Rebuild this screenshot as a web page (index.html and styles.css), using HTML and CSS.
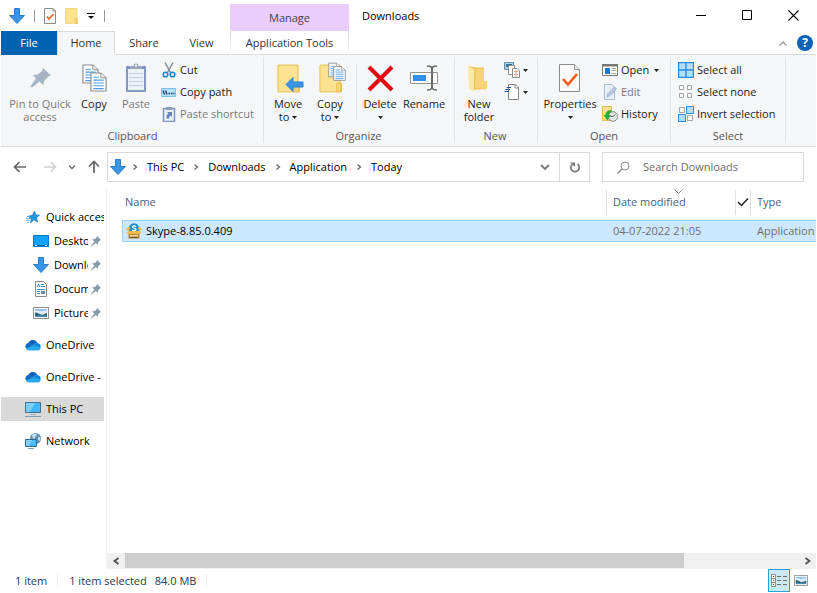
FILE: index.html
```
<!DOCTYPE html>
<html lang="en">
	<head>
		<meta charset="utf-8">
		<title>Downloads</title>
		<meta name="viewport" content="width=device-width, initial-scale=1" />
		<link rel="stylesheet" href="styles.css">
	</head>
	<body>

		<!-- shapes used more than once -->
		<svg class="Defs" aria-hidden="true">
			<symbol id="DownArrow" viewBox="0 0 16 16">
				<path d="M5.500.500h5v7h5L8 15.500.500 7.500h5z" fill="#3a96e4" stroke="#2a7cc6"/>
			</symbol>
			<symbol id="Caret" viewBox="0 0 5 3">
				<path d="M0 0h5L2.500 3z" fill="#222"/>
			</symbol>
			<symbol id="Chevron" viewBox="0 0 6 8">
				<path d="M1.500 1.500L4.500 4l-3 2.500" fill="none" stroke="#666" stroke-width="1.300"/>
			</symbol>
			<symbol id="Pushpin" viewBox="0 0 12 12">
				<path d="M7 1l4 4-1.200.4L8 7.200l-.2 2.600L5.500 8 1.500 11.500 1 11l3.300-4.400L2.200 4.200l2.600-.2L6.600 2.200z" fill="#8a99a6"/>
			</symbol>
			<symbol id="Cloud" viewBox="0 0 16 12">
				<path d="M3.500 4.200A4.700 4.700 0 0 1 12.300 4L9 8.500z" fill="#0a5cb8"/>
				<path d="M4 3.800A3.700 3.700 0 0 0 1 9.500l7 .5 2-4z" fill="#0f6cc6"/>
				<path d="M7 5.500c1.500-1.800 4-2.200 5.500-1.400A3.500 3.500 0 0 1 15.600 8.500L12 10z" fill="#1484dc"/>
				<path d="M1 9.500L9 6l6.500 3c0 1.500-1.300 2.500-3 2.500H4C2.700 11.500 1.500 10.700 1 9.500z" fill="#28a8ea"/>
			</symbol>
			<symbol id="Page" viewBox="0 0 18 21">
				<path d="M1 1h10.500L17 6v14H1z" fill="#fff" stroke="#8b8b8b" stroke-width="1.200"/>
				<path d="M11.500 1v5H17" fill="#eee" stroke="#8b8b8b"/>
				<path d="M3.500 5.500h6M3.500 8.500h11M3.500 11.500h11M3.500 14.500h11M3.500 17.500h11" stroke="#4a9bea" stroke-width="1.200"/>
			</symbol>
			<symbol id="Folder" viewBox="0 0 24 30">
				<path d="M1 1h21v19h1.500v9H1z" fill="#fde28f" stroke="#e6bf55"/>
				<path d="M18.500 29v-9h4v9z" fill="#f8d775" stroke="#e6bf55"/>
			</symbol>
			<symbol id="Photo" viewBox="0 0 16 12">
				<path d="M.500.500h15v11H.500z" fill="#fff" stroke="#8f8f8f"/>
				<path d="M2 2h12v3H2z" fill="#8fbdf0"/>
				<path d="M2 3.500c2-1 4 .5 6 .5s4-1 6 0V7H2z" fill="#dcecf8"/>
				<path d="M2 5.500c2 0 4 1.500 6 2s4-.5 6-1.500v3H2z" fill="#2c6475"/>
				<path d="M2 8.500h12V10H2z" fill="#4a8cb8"/>
			</symbol>
		</svg>

		<header class="TitleBar">
			<div class="QuickTools">
				<svg width="16" height="16"><use href="#DownArrow"/></svg>
				<span class="Divider"></span>
				<button class="IconButton" aria-label="Properties">
					<svg width="12" height="16" viewBox="0 0 12 16"><path d="M.500.500H9L11.500 3v12.500H.500z" fill="#fafafa" stroke="#8d8d8d"/><path d="M9 .500V3h2.500" fill="none" stroke="#8d8d8d"/><path d="M3 8.500L5 11l4.500-5" fill="none" stroke="#f0622a" stroke-width="1.600"/></svg>
				</button>
				<button class="IconButton" aria-label="New folder">
					<svg width="13" height="16" viewBox="0 0 24 30" preserveAspectRatio="none"><use href="#Folder"/></svg>
				</button>
				<button class="IconButton" aria-label="Customize">
					<svg width="8" height="8" viewBox="0 0 8 8"><path d="M0 1.500h8" stroke="#111"/><path d="M1 4h6L4 7z" fill="#111"/></svg>
				</button>
				<span class="Divider"></span>
			</div>
			<div class="ContextTitle">Manage</div>
			<h1>Downloads</h1>
			<div class="WindowButtons">
				<button aria-label="Minimize"><svg width="11" height="11"><path d="M0 5.500h10" stroke="#000"/></svg></button>
				<button aria-label="Maximize"><svg width="11" height="11"><path d="M.500.500h9v9h-9z" fill="none" stroke="#000"/></svg></button>
				<button aria-label="Close"><svg width="11" height="11"><path d="M.500.500l10 10M10.500.500l-10 10" stroke="#000" stroke-width="1.100"/></svg></button>
			</div>
		</header>

		<nav class="Tabs">
			<button class="Tab File">File</button>
			<button class="Tab Active">Home</button>
			<button class="Tab">Share</button>
			<button class="Tab View">View</button>
			<button class="Tab Context">Application Tools</button>
			<div class="TabsEnd">
				<button class="IconButton" aria-label="Collapse"><svg width="8" height="5"><path d="M.500 4.500L4 1l3.500 3.500" fill="none" stroke="#999" stroke-width="1.300"/></svg></button>
				<button class="Help" aria-label="Help">?</button>
			</div>
		</nav>

		<div class="Ribbon">
			<section class="Group Clipboard">
				<div class="Tools">
					<button class="Large Wide" disabled>
						<svg width="32" height="32" viewBox="0 0 32 32"><path d="M19 6l8 7.500-2.500 1-4.500 4.500-.5 4.500-4-4L8 25.500l-1.500-.5L7 23.500l5-7L9 13l5-.5 4-3.500z" fill="#a7b4c6"/></svg>
						<span>Pin to Quick<br>access</span>
					</button>
					<button class="Large Narrow">
						<svg width="32" height="32"><use href="#Page" x="4" y="2" width="17" height="20"/><use href="#Page" x="12" y="10" width="17" height="20"/></svg>
						<span>Copy</span>
					</button>
					<button class="Large" disabled>
						<svg width="32" height="32" viewBox="0 0 32 32"><rect x="6" y="4" width="20" height="26" rx="1" fill="#8199c0"/><path d="M8 7h16v21H8z" fill="#edf2f9"/><path d="M9 11.500h14M9 15.500h14M9 19.500h14M9 23.500h14" stroke="#c3d0e2"/><path d="M10 7V4h3.500a2.500 2.500 0 0 1 5 0H22v3z" fill="#9aa9bd"/><circle cx="16" cy="3.500" r="1" fill="#fff"/></svg>
						<span>Paste</span>
					</button>
					<div class="Stack">
						<button class="Small"><svg width="16" height="16" viewBox="0 0 16 16"><path d="M4 .500l5.500 10M12 .500l-5.500 10" stroke="#7d8c99" stroke-width="1.500"/><circle cx="4.500" cy="12.500" r="2.300" fill="none" stroke="#1683d0" stroke-width="1.600"/><circle cx="11.500" cy="12.500" r="2.300" fill="none" stroke="#1683d0" stroke-width="1.600"/></svg>Cut</button>
						<button class="Small"><svg width="16" height="16" viewBox="0 0 16 16"><path d="M.500 4.500h14v8H.500z" fill="#b4e0fb" stroke="#7cc0e8"/><path d="M2 6.500l1.500 4M4.500 6.500l1.500 4M7.500 9.500h1.500M10 9.500h1.500M12.300 9.500h1.200" stroke="#163e66" stroke-width="1.300"/></svg>Copy path</button>
						<button class="Small" disabled><svg width="16" height="16" viewBox="0 0 16 16"><path d="M2.500 2.500h11v13h-11z" fill="#eaf0f8" stroke="#7e97bf" stroke-width="1.500"/><path d="M5 1h6v3H5z" fill="#8b9db6"/><path d="M5.500 12.500c0-3 .5-4 2-5L6 6h5v5L9.500 9.500c-1 .5-1.500 1.500-1.500 3z" fill="#6482b4"/></svg>Paste shortcut</button>
					</div>
				</div>
				<h2>Clipboard</h2>
			</section>
			<section class="Group Organize">
				<div class="Tools">
					<button class="Large">
						<svg width="32" height="32"><use href="#Folder" x="5" y="2" width="23" height="29"/><path d="M14 22.500l7-7v4.500h10v5H21v4.500z" fill="#3a96e4" stroke="#2d82cd"/></svg>
						<span>Move<br>to <svg class="Caret"><use href="#Caret"/></svg></span>
					</button>
					<button class="Large">
						<svg width="32" height="32"><use href="#Folder" x="5" y="2" width="23" height="29"/><use href="#Page" x="14" y="0" width="13" height="16"/><use href="#Page" x="19" y="3" width="13" height="17"/></svg>
						<span>Copy<br>to <svg class="Caret"><use href="#Caret"/></svg></span>
					</button>
					<span class="ToolDivider"></span>
					<button class="Large">
						<svg width="32" height="32"><path d="M5 5l23 23M28 5L5 28" stroke="#e30613" stroke-width="4"/></svg>
						<span>Delete<br><svg class="Caret"><use href="#Caret"/></svg></span>
					</button>
					<button class="Large">
						<svg width="32" height="32"><path d="M2.500 10.500h27v11h-27z" fill="#fff" stroke="#949494"/><path d="M5 13h13v6H5z" fill="#3290e4"/><path d="M24 5v22" stroke="#6a6a6a" stroke-width="2"/><path d="M19 4q4 0 5 2 1-2 5-2M19 28q4 0 5-2 1 2 5 2" fill="none" stroke="#6a6a6a" stroke-width="1.600"/></svg>
						<span>Rename</span>
					</button>
				</div>
				<h2>Organize</h2>
			</section>
			<section class="Group New">
				<div class="Tools">
					<button class="Large">
						<svg width="32" height="32"><path d="M6 4l7 1.500h8V19h2v8l-13 1z" fill="#efc65b"/><path d="M13 7h8v12h3v8l-12-1z" fill="#f6d477"/><path d="M5 4l6 3v23l-5-3z" fill="#fde9a5"/></svg>
						<span>New<br>folder</span>
					</button>
					<div class="Stack">
						<button class="Small" aria-label="New item"><svg width="16" height="16" viewBox="0 0 16 16"><path d="M.500.500h9v7h-9z" fill="#a4d3f3" stroke="#6d8ba3"/><path d="M2 2h6v3H2z" fill="#31708f"/><path d="M4.500 3.500h6v9h-6z" fill="#fff" stroke="#8b8b8b"/><path d="M8.500 6.500H13L15.500 9v6.500h-7z" fill="#fff" stroke="#8b8b8b"/><path d="M12 8v7M10 9.500h4M10 12.500h4" stroke="#eda38a"/></svg><svg class="Caret"><use href="#Caret"/></svg></button>
						<button class="Small" aria-label="Easy access"><svg width="16" height="16" viewBox="0 0 16 16"><path d="M4.500.500h7L14.500 3v12.500h-10z" fill="#fff" stroke="#858585"/><path d="M11 .500V4h3.500" fill="none" stroke="#858585"/><path d="M2.500 3.500H7M1.500 5.500H6M.500 7.500H5" stroke="#255f9b" stroke-width="1.200"/></svg><svg class="Caret"><use href="#Caret"/></svg></button>
					</div>
				</div>
				<h2>New</h2>
			</section>
			<section class="Group Open">
				<div class="Tools">
					<button class="Large Props">
						<svg width="32" height="32"><path d="M5.500 2.500h15l5 5v22h-20z" fill="#fafafa" stroke="#8b8b8b"/><path d="M20.500 2.500v5h5" fill="#eee" stroke="#8b8b8b"/><path d="M9 17l5 5.500L23 12" fill="none" stroke="#f25a1c" stroke-width="2.600"/></svg>
						<span>Properties<br><svg class="Caret"><use href="#Caret"/></svg></span>
					</button>
					<div class="Stack">
						<button class="Small"><svg width="16" height="16" viewBox="0 0 16 16"><path d="M.500 2.500h15v11H.500z" fill="#fff" stroke="#777"/><path d="M0 2h16v2.500H0z" fill="#777"/><path d="M3 6h5v6H3z" fill="#1879ce"/><path d="M9.500 6.500H14M9.500 8.500H14M9.500 11.500H14" stroke="#a0a0a0"/></svg>Open <svg class="Caret"><use href="#Caret"/></svg></button>
						<button class="Small" disabled><svg width="16" height="16" viewBox="0 0 16 16"><path d="M2.500.500H10L12.500 3v12.500h-10z" fill="#e7eef8" stroke="#a9bad3"/><path d="M5 13l1-3.500L12.500 3 14.500 5 8 11.500z" fill="#bac9df" stroke="#91a9cb" stroke-width=".8"/></svg>Edit</button>
						<button class="Small"><svg width="16" height="16" viewBox="0 0 16 16"><path d="M.500.500h9v14h-9z" fill="#fbe08a" stroke="#e3be57"/><circle cx="11" cy="10.500" r="4.800" fill="#e4e4e4" stroke="#8d8d8d"/><path d="M11 10.500l2.500-2M11 10.500H8.500" stroke="#666"/><path d="M9.500 4C5 4 3.500 7 3.500 9H1.500l4 5.500L9 9H7c0-1.500.5-2.500 2.500-2.800z" fill="#31a83b"/></svg>History</button>
					</div>
				</div>
				<h2>Open</h2>
			</section>
			<section class="Group Select">
				<div class="Tools">
					<div class="Stack">
						<button class="Small"><svg width="16" height="16" viewBox="0 0 16 16"><path d="M.500.500h15v15H.500zM8 0v16M0 8h16" fill="#b3dffd" stroke="#2a8bdc" stroke-width="1.400"/></svg>Select all</button>
						<button class="Small"><svg width="16" height="16" viewBox="0 0 16 16"><path d="M1.500 1.500h4v4h-4zM9.500 1.500h4v4h-4zM1.500 9.500h4v4h-4zM9.500 9.500h4v4h-4z" fill="#fff" stroke="#a5a5a5"/></svg>Select none</button>
						<button class="Small"><svg width="16" height="16" viewBox="0 0 16 16"><path d="M1.500 1.500h5v5h-5zM9.500 9.500h5v5h-5z" fill="#fff" stroke="#a5a5a5"/><path d="M8.500.500h7v7h-7zM.500 8.500h7v7h-7z" fill="#b3dffd" stroke="#2a8bdc"/></svg>Invert selection</button>
					</div>
				</div>
				<h2>Select</h2>
			</section>
		</div>

		<div class="Navigation">
			<div class="History">
				<button class="IconButton" aria-label="Back"><svg width="14" height="12"><path d="M13 6H2M6.500 1L1.500 6l5 5" fill="none" stroke="#666" stroke-width="1.700"/></svg></button>
				<button class="IconButton Forward" aria-label="Forward"><svg width="14" height="12"><path d="M1 6h11M7.500 1l5 5-5 5" fill="none" stroke="#d2d2d2" stroke-width="1.700"/></svg></button>
				<button class="IconButton" aria-label="Recent locations"><svg width="8" height="6"><path d="M1 1.500l3 3 3-3" fill="none" stroke="#777" stroke-width="1.600"/></svg></button>
				<button class="IconButton" aria-label="Up"><svg width="12" height="14"><path d="M6 13V2M1 6.500L6 1.500l5 5" fill="none" stroke="#666" stroke-width="1.700"/></svg></button>
			</div>
			<div class="Address">
				<svg class="Place" width="16" height="16"><use href="#DownArrow"/></svg>
				<svg width="6" height="8"><use href="#Chevron"/></svg>
				<a href="#">This PC</a>
				<svg width="6" height="8"><use href="#Chevron"/></svg>
				<a href="#">Downloads</a>
				<svg width="6" height="8"><use href="#Chevron"/></svg>
				<a href="#">Application</a>
				<svg width="6" height="8"><use href="#Chevron"/></svg>
				<a href="#">Today</a>
				<button class="IconButton Previous" aria-label="Previous locations"><svg width="10" height="8"><path d="M1 2l4 4 4-4" fill="none" stroke="#777" stroke-width="1.800"/></svg></button>
				<button class="IconButton Refresh" aria-label="Refresh"><svg width="12" height="12"><path d="M3 3.500A4.200 4.200 0 1 0 8.500 3" fill="none" stroke="#777" stroke-width="1.700"/><path d="M1 1.500h5V6z" fill="#777"/></svg></button>
			</div>
			<label class="Search">
				<svg width="13" height="13"><circle cx="8" cy="5" r="4" fill="none" stroke="#888"/><path d="M5 8L.500 12.500" stroke="#888" stroke-width="1.300"/></svg>
				<input type="text" placeholder="Search Downloads" aria-label="Search Downloads">
			</label>
		</div>

		<div class="Content">
			<nav class="Sidebar">
				<a class="Item" href="#"><svg width="16" height="16" viewBox="0 0 16 16"><path d="M9.500 2l1.300 4 3.700.2-3 2.500 1 4.300-3.700-2.300L5.500 14l.7-4L3.500 7l3.800-.5z" fill="#2298e0" stroke="#1376bd" stroke-width=".7"/><path d="M2 7.500h2.500M1 9.500h4M1 11.500h3.500M2 13.500h2" stroke="#5eb5ea"/></svg><span>Quick access</span></a>
				<a class="Item Sub" href="#"><svg width="16" height="16" viewBox="0 0 16 16"><path d="M.500 2.500h15v11H.500z" fill="#12a0f8" stroke="#0876c3"/><path d="M1 12.500h14" stroke="#0669b0"/><path d="M2 12.500h2M12 12.500h2" stroke="#d3efff"/></svg><span>Desktop</span><svg class="Pin"><use href="#Pushpin"/></svg></a>
				<a class="Item Sub" href="#"><svg width="16" height="16"><use href="#DownArrow"/></svg><span>Downloads</span><svg class="Pin"><use href="#Pushpin"/></svg></a>
				<a class="Item Sub" href="#"><svg width="16" height="16" viewBox="0 0 16 16"><path d="M2.500.500h8l3 3v12h-11z" fill="#fff" stroke="#888"/><path d="M4 6l1.500-3L7 6M8 3.500h3M8 5.500h4M4 8.500h8M4 10.500h3M4 12.500h3" fill="none" stroke="#348dcb"/><path d="M8 10h4v3H8z" fill="#6d8ba5"/></svg><span>Documents</span><svg class="Pin"><use href="#Pushpin"/></svg></a>
				<a class="Item Sub" href="#"><svg width="16" height="12"><use href="#Photo"/></svg><span>Pictures</span><svg class="Pin"><use href="#Pushpin"/></svg></a>
				<a class="Item Root" href="#"><svg width="16" height="12"><use href="#Cloud"/></svg><span>OneDrive</span></a>
				<a class="Item Root" href="#"><svg width="16" height="12"><use href="#Cloud"/></svg><span>OneDrive - Personal</span></a>
				<a class="Item Root Current" href="#"><svg width="16" height="16" viewBox="0 0 16 16"><path d="M.500 1.500h15v10H.500z" fill="#42b6fb" stroke="#3a7195"/><path d="M1 2h9l-5 9H1z" fill="#7ccffd"/><path d="M5 13.500h6" stroke="#9eb1be"/><path d="M0 15.500h16" stroke="#7f9db1"/></svg><span>This PC</span></a>
				<a class="Item Root" href="#"><svg width="16" height="16" viewBox="0 0 16 16"><circle cx="10.500" cy="5.500" r="5.500" fill="#5d91b2"/><path d="M7 2c2-2 5-1 5 0s-2 1-2 3-3 1-3-3zM13 4l2.500 0-.5 4-2-1z" fill="#b8dced"/><path d="M.500 6.500h11v7H.500z" fill="#4bbcfb" stroke="#316a90"/><path d="M1 7h6l-3 6H1z" fill="#81d1fc"/><path d="M3 15.500h6" stroke="#819fb3"/></svg><span>Network</span></a>
			</nav>
			<main class="Main">
				<div class="Files">
					<table>
						<thead>
							<tr>
								<th class="Name"><span class="Head">Name</span></th>
								<th class="Date"><span class="Head">Date modified<svg class="Sort" width="9" height="5"><path d="M.500.500l4 4 4-4" fill="none" stroke="#888"/></svg><span class="Filter"><svg width="12" height="10"><path d="M1 5l3.500 3.500L11 1.500" fill="none" stroke="#222" stroke-width="1.500"/></svg></span></span></th>
								<th class="Type"><span class="Head">Type</span></th>
							</tr>
						</thead>
						<tbody>
							<tr class="Selected">
								<td class="Name"><span class="FileName"><svg width="16" height="16" viewBox="0 0 16 16"><circle cx="8" cy="5.500" r="5.200" fill="#1691d2"/><path d="M10 3.500C9 2.500 6.500 2.500 6.500 4S10 5 10 6.500 7 8 6 7" fill="none" stroke="#fff" stroke-width="1.300"/><path d="M2.500 8.500h11v7h-11z" fill="#b88334"/><path d="M3 9L0 6.500 2.500 3.500 4.500 5 3 7zM13 9l3-2.500-2.500-3-2 1.500L13 7zM.500 9.500L2.500 8h11l2 1.500-2 1.500h-11z" fill="#efbb50"/><path d="M4 12h8v1.500H4z" fill="#f5dba4"/><path d="M4 14.500h8" stroke="#6c4e24"/></svg>Skype-8.85.0.409</span></td>
								<td>04-07-2022 21:05</td>
								<td>Application</td>
							</tr>
						</tbody>
					</table>
				</div>
				<div class="ScrollBar">
					<button aria-label="Scroll left"><svg width="7" height="8"><path d="M5.500 1l-4 3 4 3" fill="none" stroke="#505050" stroke-width="1.800"/></svg></button>
					<div class="Track"><div class="Thumb"></div></div>
					<button aria-label="Scroll right"><svg width="7" height="8"><path d="M1.500 1l4 3-4 3" fill="none" stroke="#505050" stroke-width="1.800"/></svg></button>
				</div>
			</main>
		</div>

		<footer class="StatusBar">
			<span class="Count">1 item</span>
			<span class="Count Picked"><span>1 item selected</span><span>84.0 MB</span></span>
			<div class="ViewButtons">
				<button class="Active" aria-label="Details"><svg width="16" height="13"><path d="M.500.500h4v12h-4zM.500 4.500h4M.500 8.500h4" fill="#fff" stroke="#8c8c8c"/><path d="M6 2.500h4M12 2.500h4M6 6.500h4M12 6.500h4M6 10.500h4M12 10.500h4" stroke="#6d6d6d"/><path d="M2 2h1v1H2z" fill="#333"/><path d="M2 6h1v1H2z" fill="#2b7cff"/><path d="M2 10h1v1H2z" fill="#e81123"/></svg></button>
				<button aria-label="Large icons"><svg width="14" height="11" viewBox="0 0 16 12" preserveAspectRatio="none"><use href="#Photo"/></svg></button>
			</div>
		</footer>

	</body>
</html>
```
FILE: styles.css
```
:root
{
	--line: #dadbdc;
	--ribbon: #f5f6f7;
	--text: #222;
	--disabled: #7a7a7a;
	--accent: #0063b1;
	--context: #eaccfd;
	--heading: #4c607a;
}

*
{
	box-sizing: border-box;
}

body
{
	display: flex;
	flex-direction: column;
	height: 100vh;
	margin: 0;
	padding: 0 1px;
	overflow: hidden;
	background: #fff;
	color: var(--text);
	font-family: "Open Sans", "Noto Sans", sans-serif;
	font-size: 11px;
	line-height: 14px;
	white-space: nowrap;
}

button
{
	margin: 0;
	padding: 0;
	border: 0;
	background: none;
	color: inherit;
	font: inherit;
}

a
{
	color: #000;
	text-decoration: none;
}

h1, h2
{
	margin: 0;
	font-size: 11px;
	font-weight: normal;
}

svg
{
	flex: none;
}

.Defs
{
	display: none;
}

.IconButton
{
	display: flex;
	align-items: center;
	justify-content: center;
}

.Caret
{
	width: 5px;
	height: 3px;
	margin-bottom: 2px;
}

/* title bar */

.TitleBar
{
	display: flex;
	height: 31px;
}

.QuickTools
{
	display: flex;
	align-items: center;
	gap: 9px;
	width: 229px;
	padding-left: 8px;
}

.Divider
{
	width: 1px;
	height: 12px;
	background: #999;
}

.ContextTitle
{
	width: 119px;
	margin-top: 4px;
	background: var(--context);
	line-height: 27px;
	text-align: center;
	color: #444;
}

.TitleBar h1
{
	flex: 1;
	padding-left: 13px;
	line-height: 31px;
	color: #000;
}

.WindowButtons
{
	display: flex;
}

.WindowButtons button
{
	width: 46px;
	line-height: 0;
}

/* tabs */

.Tabs
{
	display: flex;
	height: 24px;
	box-shadow: inset 0 -1px var(--line);
}

.Tab
{
	width: 58px;
	padding-bottom: 1px;
	color: #333;
}

.Tab.File
{
	width: 56px;
	background: var(--accent);
	color: #fff;
}

.Tab.Active
{
	border: 1px solid var(--line);
	border-bottom: 0;
	background: var(--ribbon);
}

.Tab.View
{
	width: 57px;
}

.Tab.Context
{
	width: 119px;
	border: 1px solid;
	border-width: 0 1px;
	border-image: linear-gradient(#d0d0d0, #fff) 1;
}

.TabsEnd
{
	display: flex;
	align-items: center;
	gap: 10px;
	margin-left: auto;
	padding-right: 3px;
}

.Help
{
	width: 16px;
	height: 16px;
	border-radius: 50%;
	background: #0a63b8;
	color: #fff;
	font-weight: bold;
	font-size: 12px;
	line-height: 16px;
}

/* ribbon */

.Ribbon
{
	display: flex;
	height: 92px;
	padding: 2px 0 3px;
	border-bottom: 1px solid var(--line);
	background: var(--ribbon);
}

.Group
{
	display: flex;
	flex-direction: column;
	border-right: 1px solid #e2e3e4;
}

.Group h2
{
	padding-right: 4px;
	text-align: center;
	color: #555;
}

.Clipboard
{
	width: 263px;
	padding-left: 5px;
}

.Organize
{
	width: 191px;
	padding-left: 3px;
}

.New
{
	width: 83px;
	padding-left: 2px;
}

.Open
{
	width: 133px;
	padding-left: 4px;
}

.Select
{
	width: 115px;
	padding-left: 4px;
}

.Tools
{
	display: flex;
	height: 74px;
}

.Large
{
	display: flex;
	flex-direction: column;
	align-items: center;
	gap: 3px;
	width: 44px;
	padding-top: 5px;
	line-height: 13px;
}

.Large.Wide
{
	width: 68px;
}

.Large.Narrow
{
	width: 40px;
}

.Large.Props
{
	width: 56px;
}

.Organize .Large
{
	width: 42px;
}

.Organize .ToolDivider ~ .Large
{
	width: 44px;
}

.ToolDivider
{
	width: 1px;
	height: 55px;
	margin: 7px 1px 0 5px;
	background: #e2e3e4;
}

.Stack
{
	display: flex;
	flex-direction: column;
	padding-top: 2px;
}

.Small
{
	display: flex;
	align-items: center;
	gap: 3px;
	height: 22px;
	padding: 0 3px;
}

.Open .Small
{
	padding-left: 4px;
}

.Small .Caret
{
	margin: 0 0 0 2px;
}

.New .Caret
{
	margin: 0;
}

.Large:disabled,
.Small:disabled
{
	color: var(--disabled);
}

/* address row */

.Navigation
{
	display: flex;
	align-items: center;
	height: 40px;
	padding-right: 12px;
}

.History
{
	display: flex;
	align-items: center;
	justify-content: space-between;
	width: 106px;
	padding: 0 7px 0 12px;
}

.Forward
{
	margin-left: 4px;
}

.Address,
.Search
{
	display: flex;
	align-items: center;
	height: 30px;
	border: 1px solid #d9d9d9;
}

.Address
{
	flex: 1;
	gap: 9px;
	padding-left: 2px;
}

.Address .Place
{
	margin-right: -3px;
}

.Previous
{
	margin-left: auto;
}

.Refresh
{
	width: 30px;
	height: 28px;
	border-left: 1px solid #d9d9d9;
}

.Search
{
	flex: 0 1 202px;
	gap: 13px;
	margin-left: 12px;
	padding: 0 14px;
}

.Search input
{
	width: 100%;
	min-width: 0;
	padding: 0;
	border: 0;
	outline: 0;
	font: inherit;
}

.Search input::placeholder
{
	color: #6d6d6d;
}

/* folder list */

.Content
{
	display: flex;
	flex: 1;
	min-height: 0;
}

.Sidebar
{
	width: 106px;
	padding: 18px 2px 0 0;
	border-right: 1px solid #f0f0f0;
}

.Item
{
	display: flex;
	align-items: center;
	gap: 5px;
	height: 24px;
	padding-left: 24px;
}

.Item span
{
	flex: 1;
	overflow: hidden;
}

.Item.Sub
{
	padding: 0 2px 0 32px;
}

.Item.Root
{
	margin-top: 8px;
}

.Item.Current
{
	background: #d9d9d9;
}

.Item .Pin
{
	width: 12px;
	height: 12px;
	margin-left: -3px;
}

/* file list */

.Main
{
	display: flex;
	flex: 1;
	flex-direction: column;
	min-width: 0;
}

.Files
{
	flex: 1;
	overflow: hidden;
	padding: 2px 0 0 15px;
}

table
{
	width: 100%;
	table-layout: fixed;
	border-spacing: 0;
}

th, td
{
	padding: 0;
	overflow: hidden;
	font-weight: normal;
	text-align: left;
}

th
{
	height: 31px;
	vertical-align: top;
	color: var(--heading);
}

th.Date
{
	width: 144px;
}

th.Type
{
	width: 65px;
}

.Head
{
	display: flex;
	position: relative;
	align-items: center;
	height: 26px;
	padding-left: 6px;
	border-right: 1px solid #e2e2e2;
}

th.Name .Head
{
	padding-left: 3px;
}

th.Type .Head
{
	border-right: 0;
}

/* sort mark sits over the top edge of the column head */
.Sort
{
	position: absolute;
	top: 0;
	left: 67px;
}

.Filter
{
	display: flex;
	align-items: center;
	justify-content: center;
	width: 15px;
	height: 26px;
	margin-left: auto;
	border-left: 1px solid #e2e2e2;
}

td
{
	height: 22px;
	padding-left: 6px;
	border: 1px solid #99d1ff;
	border-width: 1px 0;
	background: #cce8ff;
	color: #6d6d6d;
}

td.Name
{
	padding-left: 3px;
	border-left-width: 1px;
	color: #000;
}

.FileName
{
	display: flex;
	align-items: center;
	gap: 4px;
}

.ScrollBar
{
	display: flex;
	height: 16px;
	padding-left: 1px;
	background: #f0f0f0;
}

.ScrollBar button
{
	width: 17px;
	line-height: 0;
}

.Track
{
	flex: 1;
}

.Thumb
{
	width: 83%;
	height: 15px;
	background: #cdcdcd;
}

/* status bar */

.StatusBar
{
	display: flex;
	align-items: center;
	height: 24px;
	padding-left: 14px;
	color: #1e395b;
}

.Count
{
	padding-right: 10px;
	border-right: 1px solid #eee;
}

.Picked
{
	display: flex;
	gap: 8px;
	padding-left: 11px;
}

.ViewButtons
{
	display: flex;
	align-self: flex-start;
	margin-left: auto;
	padding-right: 4px;
}

.ViewButtons button
{
	width: 22px;
	height: 23px;
	line-height: 0;
}

.ViewButtons .Active
{
	border: 1px solid #26a0da;
	background: #cbe8f6;
}
```
